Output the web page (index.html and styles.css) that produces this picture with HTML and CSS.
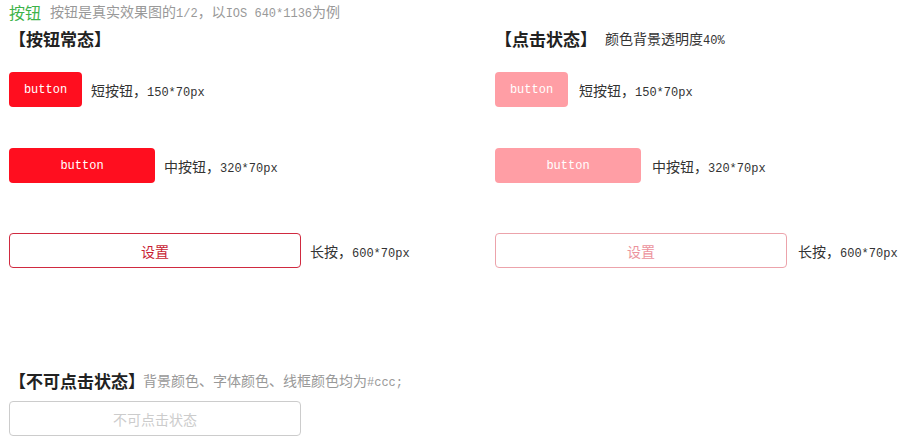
FILE: index.html
```html
<!DOCTYPE html>
<html lang="zh-CN">
<head>
<meta charset="utf-8">
<title>按钮</title>
<link rel="stylesheet" href="styles.css">
</head>
<body>
<div class="page">
  <div class="top">
    <span class="top-title">按钮</span>
    <span class="top-desc">按钮是真实效果图的<span class="en">1/2</span>，以<span class="en">IOS 640*1136</span>为例</span>
  </div>
  <div class="cols">
    <div class="col">
      <div class="heading"><b>【按钮常态】</b></div>
      <div class="row row-1">
        <span class="btn btn-solid btn-short en">button</span>
        <span class="label">短按钮，<span class="en">150*70px</span></span>
      </div>
      <div class="row row-2">
        <span class="btn btn-solid btn-mid en">button</span>
        <span class="label">中按钮，<span class="en">320*70px</span></span>
      </div>
      <div class="row row-3">
        <span class="btn btn-line btn-long">设置</span>
        <span class="label">长按，<span class="en">600*70px</span></span>
      </div>
    </div>
    <div class="col">
      <div class="heading"><b>【点击状态】</b><span class="heading-note">颜色背景透明度<span class="en">40%</span></span></div>
      <div class="row row-1">
        <span class="btn btn-solid btn-active btn-short en">button</span>
        <span class="label label-r">短按钮，<span class="en">150*70px</span></span>
      </div>
      <div class="row row-2">
        <span class="btn btn-solid btn-active btn-mid en">button</span>
        <span class="label label-r">中按钮，<span class="en">320*70px</span></span>
      </div>
      <div class="row row-3">
        <span class="btn btn-line btn-line-active btn-long">设置</span>
        <span class="label label-r">长按，<span class="en">600*70px</span></span>
      </div>
    </div>
  </div>
  <div class="disabled">
    <div class="heading"><b>【不可点击状态】</b><span class="disabled-note">背景颜色、字体颜色、线框颜色均为<span class="en">#ccc;</span></span></div>
    <span class="btn btn-disabled btn-long">不可点击状态</span>
  </div>
</div>
</body>
</html>
```

FILE: styles.css
```css
html, body {
  margin: 0;
  padding: 0;
  background: #fff;
}

body {
  font-family: "Noto Sans CJK SC", "Liberation Sans", sans-serif;
  font-size: 14px;
  color: #333;
}

.page {
  padding-left: 9px;
  width: 900px;
}

.en {
  font-family: "Liberation Mono", "Noto Sans CJK SC", monospace;
  font-size: 12px;
}

.top {
  height: 24px;
  line-height: 24px;
  display: flex;
  align-items: center;
  white-space: nowrap;
}

.top-title {
  font-size: 16px;
  color: #3db34a;
  margin-right: 9px;
}

.top-desc {
  color: #999;
  font-size: 14px;
}

.cols {
  display: grid;
  grid-template-columns: 486px 1fr;
}

.col {
  display: flex;
  flex-direction: column;
}

.heading {
  margin-top: 3px;
  height: 24px;
  line-height: 24px;
  display: flex;
  align-items: center;
  white-space: nowrap;
}

.heading b {
  font-size: 17px;
  font-weight: 700;
  color: #222;
}

.heading-note {
  margin-left: 8px;
  font-size: 14px;
  color: #333;
}

.row {
  display: flex;
  align-items: center;
  white-space: nowrap;
}

.row-1 { margin-top: 21px; }
.row-2 { margin-top: 41px; }
.row-3 { margin-top: 50px; }

.btn {
  box-sizing: border-box;
  height: 35px;
  border-radius: 4px;
  display: flex;
  align-items: center;
  justify-content: center;
  flex: none;
}

.btn-solid {
  background: #ff0e1f;
  color: #fff;
  font-size: 12px;
}

.btn-active {
  background: #ff9ea5;
}

.btn-short { width: 73px; }
.btn-mid { width: 146px; }
.btn-long { width: 292px; }

.btn-line {
  border: 1px solid #d02a40;
  color: #c81d33;
  font-size: 14px;
  background: #fff;
}

.btn-line-active {
  border-color: #eca3ab;
  color: #ec939d;
}

.label {
  margin-left: 9px;
  color: #333;
}

.label-r {
  margin-left: 11px;
}

.disabled {
  margin-top: 101px;
  display: flex;
  flex-direction: column;
}

.disabled-note {
  margin-left: -2px;
  color: #999;
  font-size: 14px;
}

.disabled .heading {
  margin-top: 0;
}

.btn-disabled {
  margin-top: 8px;
  border: 1px solid #ccc;
  color: #ccc;
  font-size: 14px;
  background: #fff;
}
```
